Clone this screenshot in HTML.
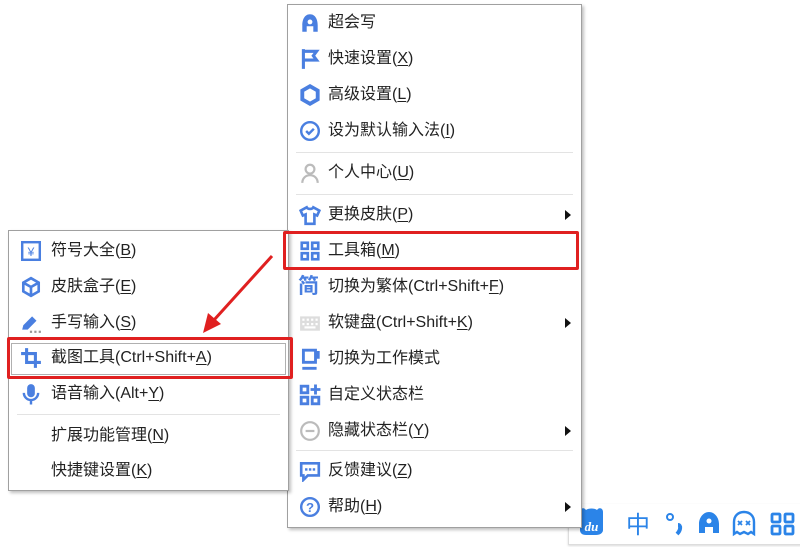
<!DOCTYPE html>
<html><head><meta charset="utf-8"><style>
body{margin:0;width:800px;height:547px;background:#fff;position:relative;overflow:hidden;font-family:"Liberation Sans","Noto Sans CJK SC",sans-serif;}
.menu{position:absolute;background:#fff;border:1px solid #a0a0a0;box-shadow:2px 2px 3px rgba(0,0,0,.25);z-index:2}
.it{position:absolute;left:0;right:0;height:36px;line-height:36px;font-size:16px;color:#222;}
.it .t{position:absolute;}
.it svg{position:absolute;top:7px;}
.sep{position:absolute;height:1px;background:#e3e3e3;}
.arr{position:absolute;width:0;height:0;border-top:5px solid transparent;border-bottom:5px solid transparent;border-left:6px solid #111;}
u{text-decoration:underline;text-underline-offset:2px}
.red{position:absolute;border:3px solid #e02020;border-radius:2px;z-index:3}
</style></head><body>

<!-- status bar -->
<div style="position:absolute;left:568px;top:504px;width:240px;height:40px;background:#fff;border-left:1px solid #ddd;border-bottom:1px solid #ddd;box-shadow:0 1px 2px rgba(0,0,0,.15)"></div>
<svg width="232" height="40" viewBox="0 0 232 40" style="position:absolute;left:568px;top:504px">
 <path d="M12 8c0-4 4-5 6-2 2-2 9-2 11 0 2-3 6-2 6 2v18c0 3-3 5-7 5H18c-4 0-6-2-6-5z" fill="#2b84e8"/>
 <text x="23.5" y="27" font-size="13" font-style="italic" font-weight="bold" fill="#fff" text-anchor="middle" font-family="Liberation Serif">du</text>
 <text x="70" y="29" font-size="24" fill="#2b84e8" text-anchor="middle" font-family="Noto Sans CJK SC">中</text>
 <circle cx="102" cy="13" r="3" fill="none" stroke="#2b84e8" stroke-width="2"/>
 <path d="M110 21c3 0 3 5-1 9" stroke="#2b84e8" stroke-width="4" fill="none"/>
 <path d="M141 8c-6 0-10 6-10 12v9h6v-6h8v6h6v-9c0-6-4-12-10-12z" fill="#2b84e8"/><circle cx="141" cy="17" r="2.5" fill="#fff"/>
 <path d="M166 30V18c0-6 4-10 10-10s10 4 10 10v12l-3-2-3 2-4-2-4 2-3-2z" fill="none" stroke="#2b84e8" stroke-width="2.4"/>
 <path d="M170 17l4 4M174 17l-4 4M178 17l4 4M182 17l-4 4" stroke="#2b84e8" stroke-width="1.8"/>
 <g fill="none" stroke="#2b84e8" stroke-width="2.8"><rect x="204" y="10" width="8" height="8" rx="1"/><rect x="217" y="10" width="8" height="8" rx="1"/><rect x="204" y="22" width="8" height="8" rx="1"/><rect x="217" y="22" width="8" height="8" rx="1"/></g>
</svg>

<!-- right menu -->
<div class="menu" style="left:287px;top:4px;width:293px;height:522px;">
 <div class="it" style="top:0"><svg width="22" height="22" viewBox="0 0 20 20" style="left:11px"><path d="M10 2C5 2 3 7 3 12v6h4v-5h6v5h4v-6c0-5-2-10-7-10z" fill="#4a7fe0"/><circle cx="10" cy="9" r="2.2" fill="#fff"/></svg><span class="t" style="left:40px">超会写</span></div>
 <div class="it" style="top:36px"><svg width="22" height="22" viewBox="0 0 20 20" style="left:11px"><path d="M4 1v18M4 3h12l-3 4 3 4H4" fill="none" stroke="#4a7fe0" stroke-width="2.8"/></svg><span class="t" style="left:40px">快速设置(<u>X</u>)</span></div>
 <div class="it" style="top:72px"><svg width="22" height="22" viewBox="0 0 20 20" style="left:11px"><path d="M10 2l7 4v8l-7 4-7-4V6z" fill="none" stroke="#4a7fe0" stroke-width="3.5"/></svg><span class="t" style="left:40px">高级设置(<u>L</u>)</span></div>
 <div class="it" style="top:108px"><svg width="22" height="22" viewBox="0 0 20 20" style="left:11px"><circle cx="10" cy="10" r="8" fill="none" stroke="#4a7fe0" stroke-width="2.2"/><path d="M6.5 10l2.5 2.5 4.5-4.5" fill="none" stroke="#4a7fe0" stroke-width="2.2"/></svg><span class="t" style="left:40px">设为默认输入法(<u>I</u>)</span></div>
 <div class="sep" style="top:147px;left:8px;right:8px"></div>
 <div class="it" style="top:150px"><svg width="22" height="22" viewBox="0 0 20 20" style="left:11px"><circle cx="10" cy="6.5" r="4" fill="none" stroke="#bbb" stroke-width="2"/><path d="M3 19c0-4 3-7 7-7s7 3 7 7" fill="none" stroke="#bbb" stroke-width="2"/></svg><span class="t" style="left:40px">个人中心(<u>U</u>)</span></div>
 <div class="sep" style="top:189px;left:8px;right:8px"></div>
 <div class="it" style="top:192px"><svg width="22" height="22" viewBox="0 0 20 20" style="left:11px"><path d="M7 3L1.5 6l2 4.5 2.5-1V18h8V9.5l2.5 1 2-4.5L13 3c-1 2-5 2-6 0z" fill="none" stroke="#4a7fe0" stroke-width="2.4"/></svg><span class="t" style="left:40px">更换皮肤(<u>P</u>)</span><div class="arr" style="right:10px;top:13px"></div></div>
 <div class="it" style="top:228px"><svg width="22" height="22" viewBox="0 0 20 20" style="left:11px"><g fill="none" stroke="#4a7fe0" stroke-width="2.4"><rect x="2.5" y="2.5" width="5.5" height="5.5"/><rect x="12" y="2.5" width="5.5" height="5.5"/><rect x="2.5" y="12" width="5.5" height="5.5"/><rect x="12" y="12" width="5.5" height="5.5"/></g></svg><span class="t" style="left:40px">工具箱(<u>M</u>)</span></div>
 <div class="it" style="top:264px"><span style="position:absolute;left:10px;color:#4a7fe0;font-size:21px;font-weight:bold">简</span><span class="t" style="left:40px">切换为繁体(Ctrl+Shift+<u>F</u>)</span></div>
 <div class="it" style="top:300px"><svg width="22" height="22" viewBox="0 0 20 20" style="left:11px"><rect x="1" y="4" width="18" height="13" fill="#ddd"/><g fill="#fff"><rect x="3" y="6" width="2" height="2"/><rect x="7" y="6" width="2" height="2"/><rect x="11" y="6" width="2" height="2"/><rect x="15" y="6" width="2" height="2"/><rect x="3" y="10" width="2" height="2"/><rect x="7" y="10" width="2" height="2"/><rect x="11" y="10" width="2" height="2"/><rect x="15" y="10" width="2" height="2"/><rect x="5" y="13" width="10" height="2"/></g></svg><span class="t" style="left:40px">软键盘(Ctrl+Shift+<u>K</u>)</span><div class="arr" style="right:10px;top:13px"></div></div>
 <div class="it" style="top:336px"><svg width="22" height="22" viewBox="0 0 20 20" style="left:11px"><path d="M4 2h11v11H4zM15 4h2.5v4.5H15M3 18.5h13" fill="none" stroke="#4a7fe0" stroke-width="2.6"/></svg><span class="t" style="left:40px">切换为工作模式</span></div>
 <div class="it" style="top:372px"><svg width="22" height="22" viewBox="0 0 20 20" style="left:11px"><g fill="none" stroke="#4a7fe0" stroke-width="2.6"><rect x="2" y="2" width="6" height="6"/><rect x="2" y="12" width="6" height="6"/><rect x="12" y="12" width="6" height="6"/><path d="M15 0.5v9M10.5 5h9"/></g></svg><span class="t" style="left:40px">自定义状态栏</span></div>
 <div class="it" style="top:408px"><svg width="22" height="22" viewBox="0 0 20 20" style="left:11px"><circle cx="10" cy="10" r="8" fill="none" stroke="#bbb" stroke-width="2"/><path d="M6 10h8" stroke="#bbb" stroke-width="2"/></svg><span class="t" style="left:40px">隐藏状态栏(<u>Y</u>)</span><div class="arr" style="right:10px;top:13px"></div></div>
 <div class="sep" style="top:445px;left:8px;right:8px"></div>
 <div class="it" style="top:448px"><svg width="22" height="22" viewBox="0 0 20 20" style="left:11px"><path d="M2 3h16v11H8l-4 4v-4H2z" fill="none" stroke="#4a7fe0" stroke-width="2.4"/><g fill="#4a7fe0"><rect x="5.5" y="7.5" width="2.2" height="2.2"/><rect x="9" y="7.5" width="2.2" height="2.2"/><rect x="12.5" y="7.5" width="2.2" height="2.2"/></g></svg><span class="t" style="left:40px">反馈建议(<u>Z</u>)</span></div>
 <div class="it" style="top:484px"><svg width="22" height="22" viewBox="0 0 20 20" style="left:11px"><circle cx="10" cy="10" r="8" fill="none" stroke="#4a7fe0" stroke-width="2.2"/><text x="10" y="14.5" font-size="12" font-weight="bold" fill="#4a7fe0" text-anchor="middle" font-family="Liberation Sans">?</text></svg><span class="t" style="left:40px">帮助(<u>H</u>)</span><div class="arr" style="right:10px;top:13px"></div></div>
</div>
<div class="red" style="left:283px;top:231px;width:290px;height:33px;"></div>

<!-- left menu -->
<div class="menu" style="left:8px;top:230px;width:279px;height:259px;">
 <div class="it" style="top:2px"><svg width="22" height="22" viewBox="0 0 20 20" style="left:11px"><rect x="2" y="2" width="16" height="16" fill="none" stroke="#4a7fe0" stroke-width="2.2"/><text x="10" y="14.5" font-size="11" fill="#4a7fe0" text-anchor="middle">¥</text></svg><span class="t" style="left:42px">符号大全(<u>B</u>)</span></div>
 <div class="it" style="top:38px"><svg width="22" height="22" viewBox="0 0 20 20" style="left:11px"><path d="M10 2l7 4v8l-7 4-7-4V6zM3 6l7 4 7-4M10 10v8" fill="none" stroke="#4a7fe0" stroke-width="2.4"/></svg><span class="t" style="left:42px">皮肤盒子(<u>E</u>)</span></div>
 <div class="it" style="top:74px"><svg width="22" height="22" viewBox="0 0 20 20" style="left:11px"><path d="M2 16l1-4 8-8 4 4-8 8z" fill="#4a7fe0"/><g fill="#999"><rect x="9" y="17" width="2" height="2"/><rect x="13" y="17" width="2" height="2"/><rect x="17" y="17" width="2" height="2"/></g></svg><span class="t" style="left:42px">手写输入(<u>S</u>)</span></div>
 <div style="position:absolute;left:2px;top:112px;width:273px;height:30px;border:1px solid #b0b0b0"></div>
 <div class="it" style="top:109px"><svg width="22" height="22" viewBox="0 0 20 20" style="left:11px"><path d="M6 1v13h13M1 6h13v13" fill="none" stroke="#4a7fe0" stroke-width="2.8"/></svg><span class="t" style="left:42px">截图工具(Ctrl+Shift+<u>A</u>)</span></div>
 <div class="it" style="top:145px"><svg width="22" height="22" viewBox="0 0 20 20" style="left:11px"><rect x="6.5" y="1" width="7" height="12" rx="3.5" fill="#4a7fe0"/><path d="M3.5 9a6.5 6.5 0 0013 0M10 15.5v4" fill="none" stroke="#4a7fe0" stroke-width="2.2"/></svg><span class="t" style="left:42px">语音输入(Alt+<u>Y</u>)</span></div>
 <div class="sep" style="top:183px;left:8px;right:8px"></div>
 <div class="it" style="top:187px"><span class="t" style="left:42px">扩展功能管理(<u>N</u>)</span></div>
 <div class="it" style="top:222px"><span class="t" style="left:42px">快捷键设置(<u>K</u>)</span></div>
</div>
<div class="red" style="left:7px;top:337px;width:280px;height:36px;"></div>

<!-- arrow -->
<svg width="800" height="547" style="position:absolute;left:0;top:0;z-index:4" viewBox="0 0 800 547">
 <line x1="272" y1="256" x2="214" y2="320" stroke="#e02020" stroke-width="3"/>
 <path d="M203 333l5-20 13 11z" fill="#e02020"/>
</svg>
</body></html>
